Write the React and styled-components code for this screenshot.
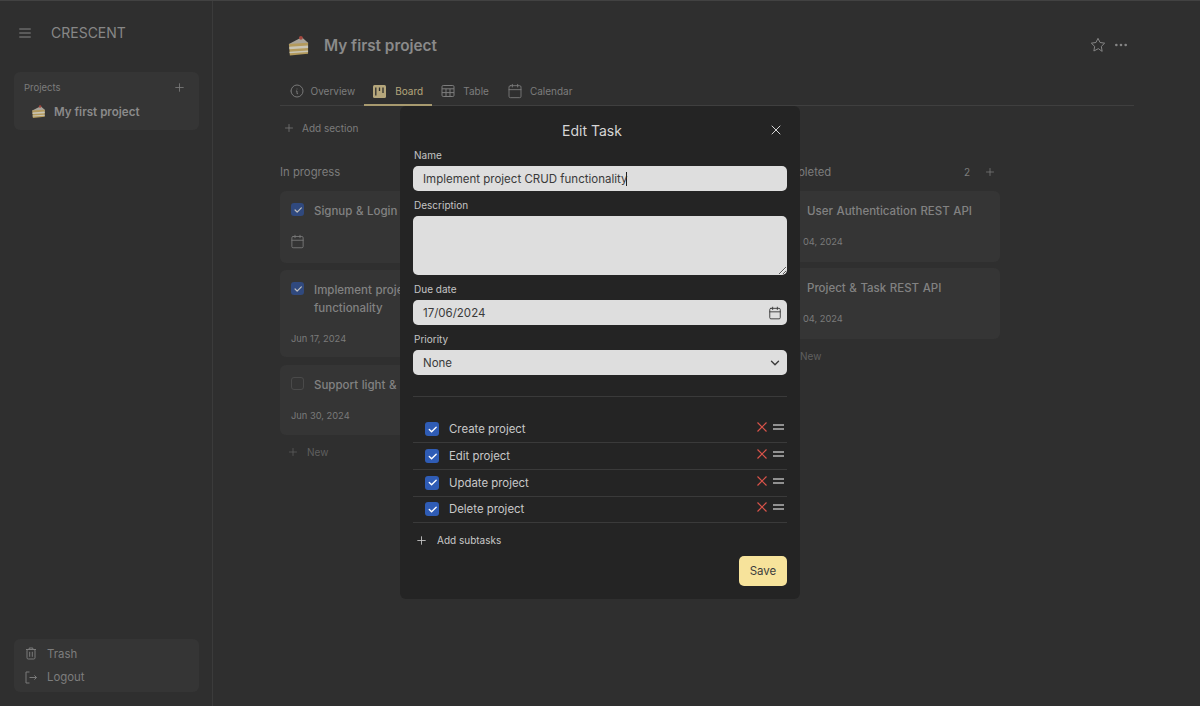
import React from "react";
import styled, { createGlobalStyle } from "styled-components";
import { TbMenu2, TbPlus, TbInfoCircle, TbStar, TbDots, TbX, TbChevronDown, TbCheck } from "react-icons/tb";
import { Calendar } from "lucide-react";

const GlobalStyle = createGlobalStyle`
  html, body {
    margin: 0;
    padding: 0;
    height: 100%;
    background: #2f2f2f;
    font-family: Inter, "Liberation Sans", sans-serif;
    overflow: hidden;
  }
  * { box-sizing: border-box; }
`;

const Page = styled.div`
  width: 1200px;
  height: 706px;
  display: flex;
  position: relative;
  overflow: hidden;
  background: #2f2f2f;
  border-top: 1px solid #424242;
`;

const Sidebar = styled.aside`
  width: 213px;
  flex-shrink: 0;
  border-right: 1px solid #3b3b3b;
  padding: 0 13px 14px 14px;
  display: flex;
  flex-direction: column;
`;

const Brand = styled.div`
  height: 31px;
  margin-top: 16px;
  padding-left: 3px;
  display: flex;
  align-items: center;
  gap: 18px;
  color: #878787;
  font-size: 14px;
  svg { flex-shrink: 0; }
`;

const SideBox = styled.div`
  width: 185px;
  background: #353535;
  border-radius: 6px;
`;

const ProjectsBox = styled(SideBox)`
  height: 58px;
  margin-top: 24px;
  padding: 7px 10px;
`;

const BottomBox = styled(SideBox)`
  height: 53px;
  margin-top: auto;
  padding: 3px 10px;
`;

const BoxHead = styled.div`
  height: 16px;
  display: flex;
  align-items: center;
  justify-content: space-between;
  color: #7c7c7c;
  font-size: 9.5px;
  svg { margin-right: 3px; }
`;

const ProjectRow = styled.div`
  display: flex;
  align-items: center;
  gap: 8px;
  margin-top: 9px;
  padding-left: 7px;
  color: #8a8a8a;
  font-size: 11.6px;
  font-weight: 600;
`;

const SideLink = styled.div`
  height: 23.5px;
  display: flex;
  align-items: center;
  gap: 10px;
  padding-left: 1px;
  color: #7d7d7d;
  font-size: 11.4px;
`;

const Main = styled.main`
  flex: 1;
  min-width: 0;
  padding: 0 66px 0 67px;
`;

const TitleRow = styled.div`
  height: 32px;
  margin-top: 28px;
  padding-left: 7px;
  display: flex;
  align-items: center;
`;

const ProjectTitle = styled.h1`
  margin: 0 0 0 14px;
  color: #8a8a8a;
  font-size: 15.3px;
  font-weight: 600;
  flex: 1;
`;

const TitleActions = styled.div`
  display: flex;
  align-items: center;
  gap: 7px;
  margin-right: 5px;
  color: #858585;
`;

const Tabs = styled.nav`
  height: 45px;
  display: flex;
  align-items: stretch;
  border-bottom: 1px solid #3f3f3f;
`;

const Tab = styled.div`
  display: flex;
  align-items: center;
  gap: ${(p) => p.$gap}px;
  padding: 17px 9px 0;
  margin-bottom: -1px;
  color: ${(p) => (p.$active ? "#b5a67b" : "#7d7d7d")};
  font-size: 10px;
  border-bottom: 2px solid ${(p) => (p.$active ? "#a89a6f" : "transparent")};
`;

const AddSection = styled.div`
  display: flex;
  align-items: center;
  gap: 7px;
  height: 16px;
  margin-top: 14px;
  padding-left: 3px;
  color: #7c7c7c;
  font-size: 10px;
`;

const Board = styled.div`
  display: flex;
  gap: 19.5px;
  width: 720px;
  margin-top: 26px;
`;

const Column = styled.section`
  width: 227px;
  flex-shrink: 0;
`;

const ColumnHead = styled.div`
  height: 18px;
  padding-top: 2px;
  display: flex;
  align-items: center;
  justify-content: space-between;
  color: #7c7c7c;
  font-size: 11.3px;
  margin-bottom: 11px;
`;

const ColumnMeta = styled.div`
  display: flex;
  align-items: center;
  gap: 14px;
  font-size: 10px;
  padding-right: 4px;
`;

const Card = styled.article`
  height: ${(p) => p.$height}px;
  margin-bottom: ${(p) => p.$gap}px;
  padding: 11px 11px;
  background: #353535;
  border-radius: 6px;
`;

const CardTop = styled.div`
  display: flex;
  gap: 10px;
`;

const CardTitle = styled.div`
  margin-top: 1px;
  color: #828282;
  font-size: 11.5px;
  font-weight: 500;
  line-height: 17.5px;
  word-spacing: 0.5px;
`;

const CardFoot = styled.div`
  margin-top: 12px;
  height: 18px;
  display: flex;
  align-items: center;
  color: #7a7a7a;
  font-size: 9.3px;
  svg { margin-left: -1px; }
`;

const CardBox = styled.span`
  width: 13px;
  height: 13px;
  margin-top: 1px;
  flex-shrink: 0;
  border-radius: 3px;
  display: flex;
  align-items: center;
  justify-content: center;
  color: #bdbdbd;
  background: ${(p) => (p.$checked ? "#30497e" : "transparent")};
  border: ${(p) => (p.$checked ? "none" : "1px solid #4a4a4a")};
`;

const NewRow = styled.div`
  display: flex;
  align-items: center;
  gap: 8px;
  padding-left: 7px;
  height: 16px;
  color: #5f5f5f;
  font-size: 10px;
`;

const Modal = styled.div`
  position: absolute;
  left: 400px;
  top: 105px;
  width: 400px;
  height: 493px;
  padding: 12px 13px;
  background: #242424;
  border-radius: 6px;
`;

const ModalHead = styled.div`
  height: 24px;
  display: flex;
  align-items: center;
  justify-content: space-between;
  color: #d6d6d6;
  svg { margin-right: 3px; }
`;

const ModalTitle = styled.h2`
  margin: 0 0 0 149px;
  font-size: 14px;
  font-weight: 400;
`;

const Label = styled.label`
  display: block;
  height: 14px;
  line-height: 14px;
  margin: ${(p) => p.$top}px 0 4px;
  padding-left: 1px;
  color: #c4c4c4;
  font-size: 10px;
`;

const Field = styled.div`
  height: 25px;
  padding: 1px 5px 0 10px;
  display: flex;
  align-items: center;
  justify-content: space-between;
  background: #dedede;
  border-radius: 5px;
  color: #3a3a3a;
  font-size: 11.5px;
`;

const Caret = styled.span`
  display: inline-block;
  width: 1px;
  height: 14px;
  margin-left: -1px;
  vertical-align: -3px;
  background: #222;
`;

const Description = styled.textarea`
  display: block;
  width: 100%;
  height: 59px;
  padding: 6px 10px;
  border: none;
  outline: none;
  background: #dedede;
  border-radius: 5px;
  font: inherit;
  resize: vertical;
`;

const Divider = styled.hr`
  height: 1px;
  border: none;
  margin: 21px 0 19.5px;
  background: #3a3a3a;
`;

const Subtask = styled.div`
  height: 26.7px;
  display: flex;
  align-items: center;
  border-bottom: 1px solid #3a3a3a;
  padding: 0 3px 0 12px;
  color: #c8c8c8;
  font-size: 11.4px;
`;

const SubtaskBox = styled.span`
  width: 14px;
  height: 14px;
  border-radius: 3px;
  display: flex;
  align-items: center;
  justify-content: center;
  color: #fff;
  background: #2f5cb5;
`;

const SubtaskName = styled.span`
  flex: 1;
  margin-left: 10px;
`;

const SubtaskActions = styled.div`
  display: flex;
  align-items: center;
  gap: 6px;
  margin-top: -4px;
`;

const AddSubtasks = styled.div`
  height: 16px;
  margin-top: 9px;
  padding-left: 2px;
  display: flex;
  align-items: center;
  gap: 9px;
  color: #c8c8c8;
  font-size: 10px;
`;

const ModalFoot = styled.div`
  display: flex;
  justify-content: flex-end;
  margin-top: 8px;
`;

const SaveButton = styled.button`
  width: 48px;
  height: 30px;
  border: none;
  border-radius: 5px;
  background: #f7e39b;
  color: #3d3d3d;
  font: inherit;
  font-size: 11.5px;
`;

const Cake = ({ size = 24 }) => (
  <svg width={size} height={size} viewBox="0 0 24 24">
    <path d="M2 10.5 15.5 3.5 22 9v2L2 12z" fill="#a8a398" />
    <path d="M2 10.5 22 9v11.5L3 22.5z" fill="#b39a5c" />
    <path d="M2.3 13.4 22 12v2.6L2.5 16z" fill="#c9c5b6" />
    <path d="M2.6 18.5 22 17.2v1.5L2.7 20z" fill="#c9c5b6" />
    <circle cx="14.5" cy="4" r="2" fill="#a5483f" />
  </svg>
);

const BoardIcon = () => (
  <svg width="13" height="13" viewBox="0 0 13 13">
    <rect width="13" height="13" rx="1.5" fill="#b5a67b" />
    <path d="M2.8 2.5v8M6.5 2.5v3.5M10 2.5v5.5" stroke="#2f2f2f" strokeWidth="1.3" />
  </svg>
);

const TableIcon = () => (
  <svg width="14" height="14" viewBox="0 0 14 14" fill="none" stroke="#7d7d7d" strokeWidth="1">
    <rect x="1" y="1.5" width="12" height="11" rx="1.2" />
    <path d="M1 4.8h12M1 8.6h12M5 4.8v7.7M9 4.8v7.7" />
  </svg>
);

const TrashIcon = () => (
  <svg width="12" height="13" viewBox="0 0 12 13" fill="none" stroke="#7a7a7a" strokeWidth="1">
    <path d="M1 2.5h10M4.2 2.5V1h3.6v1.5" />
    <rect x="2" y="2.5" width="8" height="9.5" rx="1.2" />
    <path d="M4.7 4.8v5M7.3 4.8v5" />
  </svg>
);

const LogoutIcon = () => (
  <svg width="12" height="13" viewBox="0 0 12 13" fill="none" stroke="#7a7a7a" strokeWidth="1">
    <path d="M4.5 1H1v11h3.5" />
    <path d="M4.5 6.5h7M9.4 4.4l2.1 2.1-2.1 2.1" />
  </svg>
);

const RedX = () => (
  <svg width="10" height="10" viewBox="0 0 10 10" stroke="#d9534a" strokeWidth="1.2">
    <path d="M.5.5l9 9M9.5.5l-9 9" />
  </svg>
);

const Grip = () => (
  <svg width="11" height="6" viewBox="0 0 11 6" stroke="#b5b5b5" strokeWidth="1.3">
    <path d="M0 1h11M0 5h11" />
  </svg>
);

const subtasks = ["Create project", "Edit project", "Update project", "Delete project"];

const App = () => {
  return (
    <Page>
      <GlobalStyle />
      <Sidebar>
        <Brand>
          <TbMenu2 size={16} strokeWidth={1.5} />
          <span>CRESCENT</span>
        </Brand>
        <ProjectsBox>
          <BoxHead>
            <span>Projects</span>
            <TbPlus size={13} strokeWidth={1.5} />
          </BoxHead>
          <ProjectRow>
            <Cake size={15} />
            <span>My first project</span>
          </ProjectRow>
        </ProjectsBox>
        <BottomBox>
          <SideLink>
            <TrashIcon />
            <span>Trash</span>
          </SideLink>
          <SideLink>
            <LogoutIcon />
            <span>Logout</span>
          </SideLink>
        </BottomBox>
      </Sidebar>
      <Main>
        <TitleRow>
          <Cake size={23} />
          <ProjectTitle>My first project</ProjectTitle>
          <TitleActions>
            <TbStar size={16} strokeWidth={1.5} />
            <TbDots size={16} />
          </TitleActions>
        </TitleRow>
        <Tabs>
          <Tab $gap={5.5}>
            <TbInfoCircle size={16} strokeWidth={1.4} />
            <span>Overview</span>
          </Tab>
          <Tab $active $gap={9}>
            <BoardIcon />
            <span>Board</span>
          </Tab>
          <Tab $gap={8}>
            <TableIcon />
            <span>Table</span>
          </Tab>
          <Tab $gap={7}>
            <Calendar size={16} strokeWidth={1.3} />
            <span>Calendar</span>
          </Tab>
        </Tabs>
        <AddSection>
          <TbPlus size={12} strokeWidth={1.5} />
          <span>Add section</span>
        </AddSection>
        <Board>
          <Column>
            <ColumnHead>
              <span>In progress</span>
            </ColumnHead>
            <Card $height={72} $gap={7}>
              <CardTop>
                <CardBox $checked>
                  <TbCheck size={10} strokeWidth={3} />
                </CardBox>
                <CardTitle>Signup &amp; Login UI</CardTitle>
              </CardTop>
              <CardFoot>
                <Calendar size={15} strokeWidth={1.4} />
              </CardFoot>
            </Card>
            <Card $height={87} $gap={8}>
              <CardTop>
                <CardBox $checked>
                  <TbCheck size={10} strokeWidth={3} />
                </CardBox>
                <CardTitle>Implement project CRUD functionality</CardTitle>
              </CardTop>
              <CardFoot>Jun 17, 2024</CardFoot>
            </Card>
            <Card $height={70} $gap={9}>
              <CardTop>
                <CardBox />
                <CardTitle>Support light &amp; dark mode</CardTitle>
              </CardTop>
              <CardFoot>Jun 30, 2024</CardFoot>
            </Card>
            <NewRow>
              <TbPlus size={12} strokeWidth={1.5} />
              <span>New</span>
            </NewRow>
          </Column>
          <Column />
          <Column>
            <ColumnHead>
              <span>Completed</span>
              <ColumnMeta>
                <span>2</span>
                <TbPlus size={12} strokeWidth={1.5} />
              </ColumnMeta>
            </ColumnHead>
            <Card $height={71} $gap={6}>
              <CardTop>
                <CardBox />
                <CardTitle>User Authentication REST API</CardTitle>
              </CardTop>
              <CardFoot>Jun 04, 2024</CardFoot>
            </Card>
            <Card $height={71} $gap={9}>
              <CardTop>
                <CardBox />
                <CardTitle>Project &amp; Task REST API</CardTitle>
              </CardTop>
              <CardFoot>Jun 04, 2024</CardFoot>
            </Card>
            <NewRow>
              <TbPlus size={12} strokeWidth={1.5} />
              <span>New</span>
            </NewRow>
          </Column>
        </Board>
      </Main>
      <Modal>
        <ModalHead>
          <ModalTitle>Edit Task</ModalTitle>
          <TbX size={16} strokeWidth={1.5} />
        </ModalHead>
        <Label $top={6}>Name</Label>
        <Field>
          <span>
            Implement project CRUD functionality
            <Caret />
          </span>
        </Field>
        <Label $top={7}>Description</Label>
        <Description readOnly />
        <Label $top={7}>Due date</Label>
        <Field>
          <span>17/06/2024</span>
          <Calendar size={14} strokeWidth={1.6} />
        </Field>
        <Label $top={7}>Priority</Label>
        <Field>
          <span>None</span>
          <TbChevronDown size={14} strokeWidth={2.4} />
        </Field>
        <Divider />
        {subtasks.map((name) => (
          <Subtask key={name}>
            <SubtaskBox>
              <TbCheck size={11} strokeWidth={3} />
            </SubtaskBox>
            <SubtaskName>{name}</SubtaskName>
            <SubtaskActions>
              <RedX />
              <Grip />
            </SubtaskActions>
          </Subtask>
        ))}
        <AddSubtasks>
          <TbPlus size={13} strokeWidth={1.6} />
          <span>Add subtasks</span>
        </AddSubtasks>
        <ModalFoot>
          <SaveButton>Save</SaveButton>
        </ModalFoot>
      </Modal>
    </Page>
  );
};

export default App;
